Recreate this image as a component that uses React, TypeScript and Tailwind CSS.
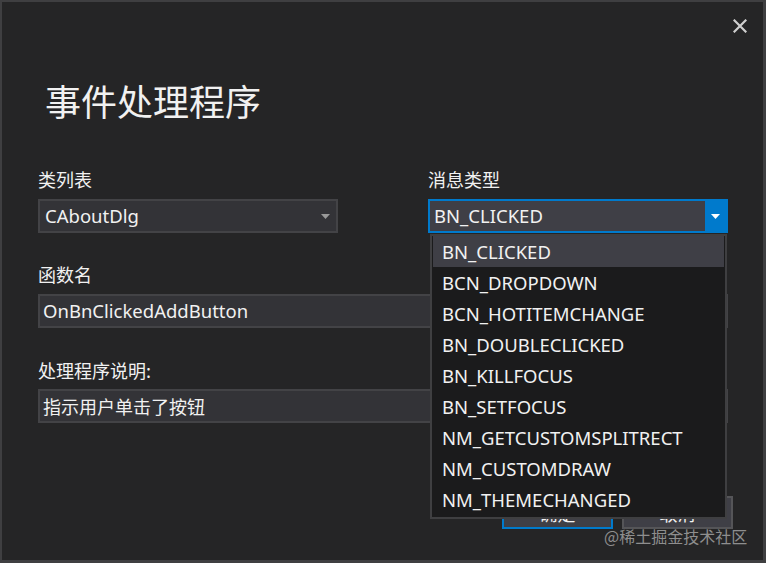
import React from "react";

const items = [
  "BN_CLICKED",
  "BCN_DROPDOWN",
  "BCN_HOTITEMCHANGE",
  "BN_DOUBLECLICKED",
  "BN_KILLFOCUS",
  "BN_SETFOCUS",
  "NM_GETCUSTOMSPLITRECT",
  "NM_CUSTOMDRAW",
  "NM_THEMECHANGED",
];

function Caret({ color }: { color: string }) {
  return (
    <svg width="9" height="5" viewBox="0 0 9 5">
      <path d="M0 0 H9 L4.5 5 Z" fill={color} />
    </svg>
  );
}

const cjk = "font-['Noto_Sans_CJK_SC','Noto_Sans',sans-serif]";
const latin = "font-['Noto_Sans','Noto_Sans_CJK_SC',sans-serif] text-[18.5px]";

export default function App() {
  return (
    <div className="relative w-[766px] h-[563px] bg-[#252526] border-t-2 border-l-2 border-r-[3px] border-b-[3px] border-[#3f3f41] text-[#f1f1f1] overflow-hidden font-['Noto_Sans','Noto_Sans_CJK_SC',sans-serif]">
      {/* top bar */}
      <div className="flex justify-end h-[48px] pt-[17px] pr-[16px]">
        <svg width="14" height="14" viewBox="0 0 14 14">
          <path d="M1.5 1.5 L12.5 12.5 M12.5 1.5 L1.5 12.5" stroke="#cfcfcf" strokeWidth="2.2" strokeLinecap="square" />
        </svg>
      </div>

      <div className="pl-[36px] pr-[35px]">
        <div className={`mt-[32px] ml-[7px] h-[36px] text-[36px] leading-[36px] ${cjk}`}>事件处理程序</div>

        <div className="grid grid-cols-[300px_300px] gap-x-[90px] mt-[49px]">
          <div>
            <div className={`h-[24px] text-[18px] leading-[24px] ${cjk}`}>类列表</div>
            <div className="mt-[8px] h-[34px] bg-[#333337] border-2 border-[#434346] flex items-center pl-[5px] pr-[6px]">
              <span className={`flex-1 ${latin}`}>CAboutDlg</span>
              <Caret color="#999999" />
            </div>
          </div>
          <div>
            <div className={`h-[24px] text-[18px] leading-[24px] ${cjk}`}>消息类型</div>
            <div className="mt-[8px] h-[34px] bg-[#3f3f46] border-2 border-[#007acc] flex items-stretch">
              <span className={`flex-1 pl-[4px] leading-[30px] ${latin}`}>BN_CLICKED</span>
              <div className="w-[21px] bg-[#007acc] flex items-center justify-center">
                <Caret color="#ffffff" />
              </div>
            </div>
          </div>
        </div>

        <div className={`mt-[29px] h-[24px] text-[18px] leading-[24px] ${cjk}`}>函数名</div>
        <div className="mt-[8px] h-[34px] bg-[#333337] border-2 border-[#434346] flex items-center pl-[3px]">
          <span className={latin}>OnBnClickedAddButton</span>
        </div>

        <div className={`mt-[30px] h-[24px] text-[18px] leading-[24px] ${cjk}`}>处理程序说明:</div>
        <div className="mt-[7px] h-[34px] bg-[#333337] border-2 border-[#434346] flex items-center pl-[3px]">
          <span className={`text-[18px] ${cjk}`}>指示用户单击了按钮</span>
        </div>

        <div className="mt-[73px] flex justify-end gap-[9px] mr-[-5px]">
          <div className={`w-[111px] h-[33px] bg-[#3f3f46] border-2 border-[#007acc] flex items-center justify-center text-[18px] leading-[20px] ${cjk}`}>
            确定
          </div>
          <div className={`w-[111px] h-[33px] bg-[#3f3f46] border-2 border-[#555558] flex items-center justify-center text-[18px] leading-[20px] ${cjk}`}>
            取消
          </div>
        </div>
      </div>

      {/* dropdown list overlay */}
      <div className="absolute left-[428px] top-[232px] w-[297px] h-[285px] bg-[#1b1b1c] border-2 border-[#3f3f41] pt-[0px] px-[1px]">
        {items.map((t, i) => (
          <div
            key={t}
            className={
              i === 0
                ? `h-[31px] pl-[9px] flex items-center bg-[#3f3f46] ${latin}`
                : `h-[31px] pl-[9px] flex items-center ${latin}`
            }
          >
            {t}
          </div>
        ))}
      </div>

      {/* watermark */}
      <div className={`absolute left-[602px] top-[524px] text-[16px] leading-[20px] text-[#8e8e8e] ${cjk}`}>
        @稀土掘金技术社区
      </div>
    </div>
  );
}
